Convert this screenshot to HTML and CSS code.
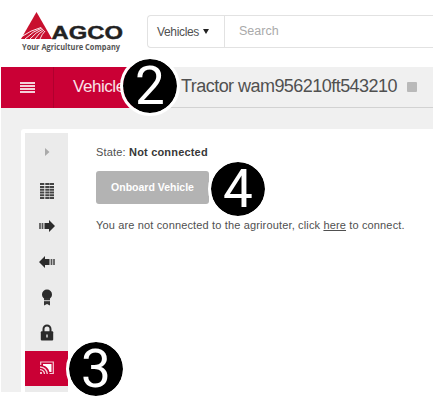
FILE: index.html
```html
<!DOCTYPE html>
<html lang="en">
<head>
<meta charset="utf-8">
<title>AGCO Vehicles</title>
<link rel="stylesheet" href="styles.css">
</head>
<body>
<div class="app">
  <header class="top">
    <svg class="logo" width="104" height="44" viewBox="0 0 104 44">
      <path d="M15.500 0 31 27H0z" fill="#c8102e"/>
      <g fill="none" stroke="#fff" stroke-width=".9"><path d="M0 25Q10 18 20 15.500M4 27Q12 19 21 16M9 27Q15 20 22 17M14 27Q18 21 23 18M19 27Q21 22 24 19"/></g>
      <text class="brand" x="30.500" y="27.200" textLength="71.500" lengthAdjust="spacingAndGlyphs">AGCO</text>
      <text class="slogan" x="1" y="38" textLength="98" lengthAdjust="spacingAndGlyphs">Your Agriculture Company</text>
    </svg>
    <div class="search">
      <div class="scope">Vehicles<i class="caret"></i></div>
      <div class="query">Search</div>
    </div>
  </header>
  <div class="bar">
    <div class="burger"><i></i><i></i><i></i><i></i></div>
    <div class="section">Vehicles</div>
    <h1 class="title">Tractor wam956210ft543210</h1>
    <i class="status"></i>
  </div>
  <main class="body">
    <div class="panel">
      <nav class="side">
        <div class="item first"><svg width="16" height="16" viewBox="0 0 16 16"><path d="M6 4l4.500 4L6 12z" fill="#aaa"/></svg></div>
        <div class="item"><svg width="14" height="16" viewBox="0 0 14 16"><path d="M0 1h14M0 4h14M0 6.800h14M0 9.600h14M0 12.200h14M0 15h14" stroke="#444" stroke-width="2"/><path d="M4.800 0v16" stroke="#ebebeb" stroke-width="1"/><path d="M9.500 0v16" stroke="#ebebeb" stroke-width=".4"/></svg></div>
        <div class="item"><svg width="16" height="14" viewBox="0 0 16 14"><path d="M5.500 4H10V1l6 6-6 6v-3H5.500z" fill="#2b2b2b"/><path d="M1 4v6M3.500 4v6" stroke="#555" stroke-width="1.700"/></svg></div>
        <div class="item"><svg width="16" height="14" viewBox="0 0 16 14"><path d="M10.500 4H6V1L0 7l6 6v-3h4.500z" fill="#2b2b2b"/><path d="M12.500 4v6M15 4v6" stroke="#555" stroke-width="1.700"/></svg></div>
        <div class="item"><svg width="16" height="18" viewBox="0 0 16 18"><circle cx="8" cy="6.500" r="5" fill="#2b2b2b"/><path d="M5 10h6v7.500l-3-1.500-3 1.500z" fill="#333"/><path d="M5 12.700h6" stroke="#ebebeb" stroke-width=".9"/></svg></div>
        <div class="item"><svg width="14" height="17" viewBox="0 0 14 17"><path d="M3.500 8V5a3.500 3.500 0 0 1 7 0v3" fill="none" stroke="#2b2b2b" stroke-width="2"/><rect x=".8" y="7.300" width="12.400" height="9.200" rx="1" fill="#2b2b2b"/><path d="M7 10.500v3" stroke="#ddd" stroke-width="1.500"/></svg></div>
        <div class="item active"><svg width="14" height="14" viewBox="0 0 14 14"><path d="M.7 4V1h12.600v11.500H9.500" fill="none" stroke="#f4c9d3" stroke-width="1.200"/><path d="M3 3h8.500v8H9.500Q8 5.500 3 4.500z" fill="#fff"/><path d="M0 6q6.500.5 7.300 7M0 8.700q4 .3 4.500 4.300" fill="none" stroke="#f7d5dd" stroke-width="1.300"/><circle cx="1" cy="12" r="1" fill="#fff"/></svg></div>
      </nav>
      <section class="content">
        <p class="state">State: <b>Not connected</b></p>
        <div class="button">Onboard Vehicle</div>
        <p class="message">You are not connected to the agrirouter, click <u>here</u> to connect.</p>
      </section>
    </div>
  </main>
  <div class="badge two">2</div>
  <div class="badge three">3</div>
  <div class="badge four">4</div>
</div>
</body>
</html>
```
FILE: styles.css
```css
* { box-sizing: border-box; }
body { margin: 0; background: #fff; font-family: "Liberation Sans", Arial, sans-serif; color: #505050; }
.app { position: relative; width: 435px; height: 400px; padding: 0 2px 0 1px; overflow: hidden; }
.top { display: flex; height: 67px; padding-left: 20px; }
.logo { margin-top: 12px; flex: none; overflow: visible; }
.brand { font: bold 19px "Liberation Sans", sans-serif; fill: #222; stroke: #222; stroke-width: .4px; }
.slogan { font: bold 9.5px "Open Sans", sans-serif; fill: #555; }
.search { display: flex; flex: 1; height: 33px; margin: 15px 0 0 22px; border: 1px solid #e2e2e2; border-right: 0; border-radius: 4px 0 0 4px; font-size: 12px; line-height: 32px; }
.scope { width: 77px; padding-left: 9px; border-right: 1px solid #e2e2e2; letter-spacing: -.34px; }
.caret { display: inline-block; margin-left: 4px; border: 3.5px solid transparent; border-top: 5px solid #222; border-bottom: 0; vertical-align: 2px; }
.query { padding-left: 14px; color: #aaa; font-size: 12.5px; line-height: 31px; }
.bar { display: flex; align-items: center; height: 41px; background: #f0f0f0; border-bottom: 1px solid #d2d2d2; }
.burger { display: flex; flex-direction: column; justify-content: center; gap: 1px; width: 53px; height: 41px; padding-left: 19px; background: #ca0035; border-right: 1px solid #b0002e; }
.burger i { width: 15px; height: 2px; background: #f4d0d9; }
.section { width: 96px; height: 41px; padding-left: 19px; background: #ca0035; color: #f9e2e8; font-size: 17px; line-height: 39px; letter-spacing: -.45px; }
.title { margin: 0 0 1px 31px; font-size: 18px; font-weight: normal; letter-spacing: -.54px; white-space: nowrap; }
.status { width: 10px; height: 10px; margin-left: 10px; background: #b9b9b9; border-radius: 1px; }
.body { height: 284px; padding: 21px 0 0 20px; background: #f0f0f0; }
.panel { display: flex; height: 263px; padding: 4px 0 0 4px; background: #fff; border-radius: 3px 0 0 0; }
.side { width: 43px; height: 259px; background: #ebebeb; }
.item { display: flex; align-items: center; justify-content: center; height: 35.5px; }
.item.first { height: 40px; padding-bottom: 3px; }
.item.active { height: 35px; background: #ca0035; }
.content { padding: 12px 0 0 28px; font-size: 11px; }
.content p { margin: 0; line-height: 14px; white-space: nowrap; }
.state { letter-spacing: .18px; }
.state b { color: #383838; }
.message { letter-spacing: .15px; }
.button { width: 113px; height: 33px; margin: 12px 0 14px; background: #b3b3b3; border-radius: 3px; color: #fff; font-size: 10.5px; font-weight: bold; line-height: 33px; text-align: center; }
.badge { position: absolute; width: 60px; height: 60px; border: 3px solid #fff; border-radius: 50%; background: #000; color: #fff; font: 53px/54px Roboto, sans-serif; text-align: center; background-clip: padding-box; }
.two { left: 120px; top: 56px; }
.three { left: 66px; top: 339px; }
.four { left: 208px; top: 159px; }
```
